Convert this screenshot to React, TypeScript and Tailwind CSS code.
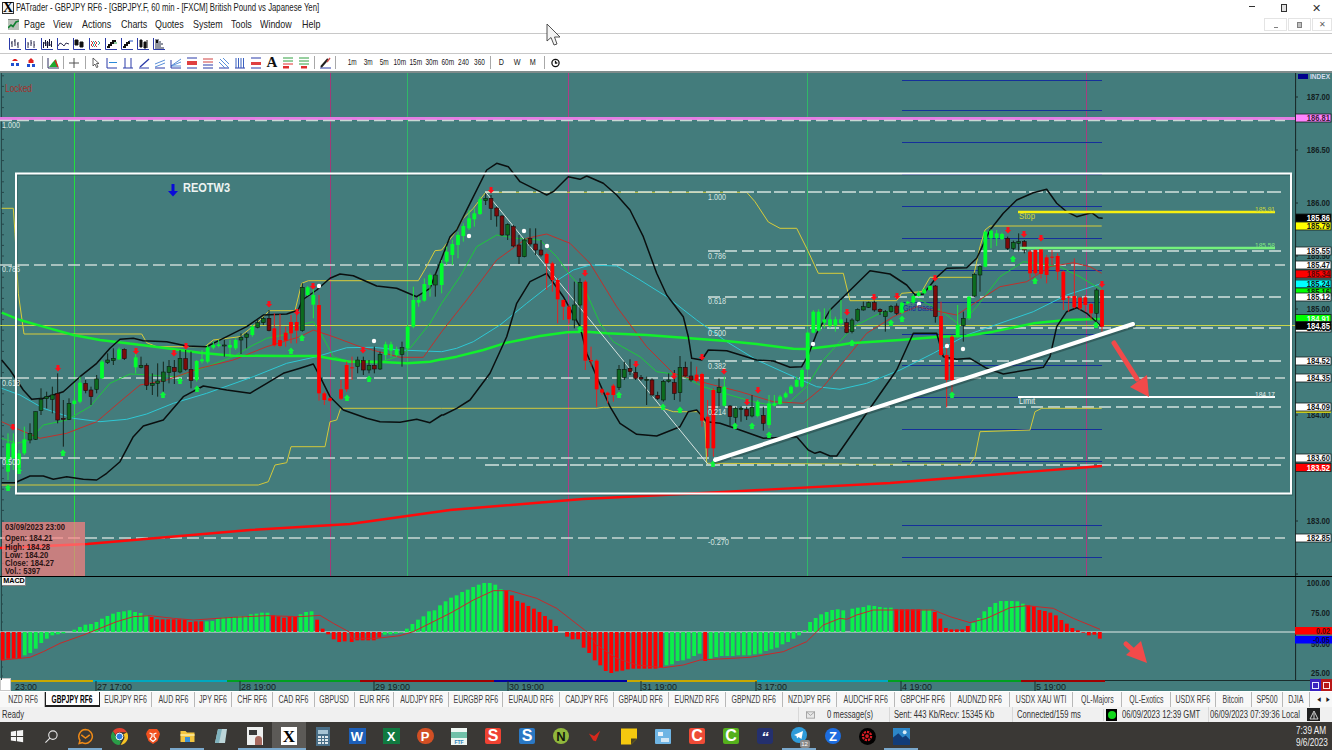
import React from "react";

// chart data read off the screen: x,y pairs are in "zoom" units (3x) relative to an origin
const O8 = [0, 160];
const O9 = [440, 160];
const O10 = [800, 170];

type Seg = string;

// joins three traced segments, each only used for its own x range
const trace = (a: Seg, b: Seg, c: Seg) => {
  const parse = (s: Seg, o: number[], min: number, max: number) =>
    s
      .split(" ")
      .filter(Boolean)
      .map((p) => {
        const [x, y] = p.split(",").map(Number);
        return [o[0] + x / 3, o[1] + y / 3];
      })
      .filter(([x]) => x >= min && x < max);
  return [...parse(a, O8, -9, 442), ...parse(b, O9, 442, 847), ...parse(c, O10, 847, 2000)]
    .map(([x, y]) => `${x.toFixed(1)},${y.toFixed(1)}`)
    .join(" ");
};

const upperBand = trace(
  "5,600 30,630 70,690 95,718 130,715 190,695 240,650 290,610 330,565 360,538 400,535 430,542 500,545 560,558 620,560 680,530 740,500 790,465 860,462 895,450 907,420 950,390 990,355 1020,342 1060,347 1130,378 1190,385 1250,410 1290,385 1340,290",
  "30,230 50,210 90,130 140,30 170,10 205,20 240,65 300,95 320,105 340,95 385,50 420,58 440,48 490,70 530,105 570,150 610,230 650,340 680,405 730,470 745,530 755,595 785,600 805,570 860,572 950,600 1000,603 1050,622 1085,620 1105,585 1130,520 1170,450 1225,375 1290,330 1350,342",
  "210,302 270,312 320,345 345,375 370,372 410,322 440,295 500,293 530,265 570,180 610,130 650,90 700,68 740,58 770,100 800,125 830,140 860,132 875,128 895,143 908,145"
);
const lowerBand = trace(
  "5,968 45,968 90,948 130,948 160,958 200,950 250,958 290,960 320,940 360,905 400,830 430,798 490,780 550,710 610,678 680,690 750,700 800,670 850,640 900,625 940,612 960,650 990,710 1030,750 1100,775 1140,785 1200,787 1250,778 1290,788 1325,765",
  "10,765 50,745 90,720 150,640 200,530 230,430 270,365 320,340 370,410 420,500 440,580 470,650 510,740 540,790 590,823 650,828 720,800 745,755 770,750 800,785 840,790 900,810 970,835 1070,830 1105,870 1125,880 1140,875 1170,888 1190,888 1240,860 1290,800 1330,730 1350,680",
  "290,600 340,490 410,490 430,560 470,568 510,565 560,595 610,612 680,600 730,592 750,560 770,470 800,425 830,413 860,430 905,470"
);
const slowMa = trace(
  "5,458 60,480 130,500 220,525 300,540 400,552 500,565 600,578 700,587 850,588 950,588 1000,597 1050,605 1130,605 1220,610 1290,605 1325,598",
  "10,598 50,590 130,570 200,548 300,528 380,517 440,515 500,520 620,525 750,535 850,542 950,552 1060,566 1100,567 1200,555",
  "150,520 300,510 420,500 500,497 580,485 700,460 800,450 900,447"
);
const cyanMa = trace(
  "5,685 60,705 130,745 220,775 300,785 380,778 440,762 520,730 620,700 760,650 860,610 950,590 1000,575 1040,563 1120,562 1200,570 1325,575",
  "0,575 50,565 100,545 180,495 260,430 330,375 400,330 450,315 530,318 600,360 680,410 770,480 860,545 950,600 1050,645 1130,680 1200,688",
  "200,640 300,600 400,550 500,495 600,460 700,425 800,375 900,342"
);
const fastGreen = trace(
  "5,835 50,850 90,840 130,795 200,780 270,740 330,670 390,642 450,645 530,650 620,620 700,590 750,560 800,535 850,525 900,495 940,485 960,515 1000,590 1050,605 1130,610 1190,590 1230,565 1290,490 1325,430",
  "0,450 60,350 110,260 170,225 230,235 300,240 350,290 390,345 440,400 480,490 520,545 600,590 650,635 720,645 790,680 870,705 940,725 990,735 1050,725 1100,680 1150,600",
  "160,470 240,430 300,415 350,385 420,420 480,465 530,410 600,320 670,275 780,290 840,320 905,360"
);
const fastRed = trace(
  "5,785 60,810 120,835 200,820 290,785 360,725 420,675 500,660 600,625 700,600 800,560 900,530 940,510 1000,530 1080,560 1200,592 1270,592 1325,515",
  "0,540 80,420 170,300 260,235 320,222 390,250 450,310 530,440 620,560 700,640 800,670 900,695 1000,725 1090,730 1150,680",
  "200,490 280,440 350,410 420,425 470,435 530,395 600,350 680,335 750,290 820,278 870,290 905,310"
);
const stopLine = trace(
  "5,145 40,145 45,220 55,400 72,522 425,522 440,548 470,560 615,560 640,540 720,530 770,490 808,452 885,452 905,370 925,362 1255,362 1275,328 1305,272 1325,270",
  "0,270 40,225 70,175 100,145 137,97 920,97 945,125 985,186 1020,205 1070,205 1100,265 1135,340 1210,340",
  "150,392 290,392 305,370 365,365 390,322 520,322 540,230 555,180 570,168 905,168"
);
const limitLine = trace(
  "5,975 775,975 805,965 825,915 860,908 873,860 975,860 990,785 1010,780 1022,745 1325,745",
  "0,745 470,745 490,742 660,742 700,755 775,755 795,790 800,910 1220,912",
  "150,883 510,883 525,860 540,785 690,780 705,725 725,715 905,715"
);

type Candle = [number, "g" | "d" | "r" | "m", number, number, number, number];

const candles8: Candle[] = [
  [24, "g", 850, 935, 820, 960], [40, "g", 850, 895, 820, 930], [57, "g", 880, 925, 870, 940], [73, "g", 838, 880, 800, 885],
  [90, "d", 820, 840, 790, 850], [107, "d", 755, 838, 755, 840], [123, "d", 718, 752, 685, 765], [140, "d", 710, 716, 695, 745],
  [157, "d", 705, 718, 680, 760], [173, "m", 700, 780, 640, 790], [190, "m", 775, 778, 720, 860], [207, "d", 730, 778, 715, 780],
  [223, "g", 722, 732, 715, 735], [240, "g", 668, 725, 650, 730], [257, "m", 670, 692, 660, 700], [273, "m", 690, 710, 680, 735],
  [290, "d", 657, 688, 645, 700], [306, "g", 605, 655, 600, 658], [323, "d", 600, 608, 580, 612], [340, "d", 595, 602, 565, 615],
  [357, "g", 568, 598, 562, 600], [373, "m", 568, 596, 565, 600], [407, "g", 592, 622, 575, 640], [423, "d", 616, 622, 590, 625],
  [440, "m", 616, 676, 610, 690], [457, "d", 670, 676, 640, 705], [473, "d", 663, 670, 610, 710], [490, "d", 636, 664, 605, 695],
  [507, "d", 620, 638, 600, 670], [523, "m", 622, 635, 600, 672], [540, "d", 596, 636, 570, 640], [557, "m", 596, 628, 570, 632],
  [573, "m", 628, 662, 575, 685], [590, "g", 603, 660, 600, 665], [606, "g", 598, 604, 570, 610], [623, "g", 562, 605, 555, 610],
  [640, "g", 555, 563, 545, 568], [656, "g", 553, 558, 540, 562], [673, "d", 555, 557, 540, 590], [690, "g", 555, 563, 540, 590],
  [707, "g", 540, 565, 535, 570], [723, "d", 532, 540, 520, 582], [740, "d", 522, 532, 518, 565], [757, "g", 500, 525, 495, 530],
  [773, "d", 488, 502, 480, 505], [790, "d", 475, 488, 470, 495], [807, "m", 475, 512, 450, 514], [823, "r", 505, 556, 460, 560],
  [840, "r", 540, 558, 462, 562], [857, "r", 518, 542, 500, 560], [873, "r", 486, 520, 465, 550], [890, "r", 486, 512, 460, 550],
  [907, "d", 382, 512, 370, 515], [923, "g", 382, 405, 378, 408], [940, "g", 405, 434, 385, 475], [957, "r", 435, 700, 405, 722],
  [973, "r", 700, 720, 695, 735], [990, "r", 715, 722, 712, 725], [1023, "r", 688, 716, 660, 720], [1040, "r", 615, 688, 605, 695],
  [1056, "r", 622, 625, 590, 660], [1073, "d", 600, 620, 590, 640], [1090, "m", 602, 630, 590, 645], [1107, "d", 616, 630, 600, 640],
  [1123, "m", 616, 627, 560, 640], [1140, "d", 583, 627, 575, 630], [1157, "g", 553, 585, 545, 600], [1173, "g", 553, 572, 545, 590],
  [1190, "g", 568, 585, 560, 590], [1206, "d", 563, 583, 545, 620], [1223, "g", 500, 565, 495, 570], [1240, "g", 420, 500, 380, 505],
  [1256, "g", 420, 428, 410, 440], [1273, "g", 372, 422, 355, 425], [1290, "g", 345, 375, 340, 410], [1306, "d", 345, 375, 340, 410],
];

const candles9: Candle[] = [
  [5, "g", 310, 375, 300, 400], [20, "g", 275, 305, 260, 315], [37, "g", 252, 285, 240, 315], [54, "g", 225, 255, 215, 295],
  [70, "g", 198, 228, 190, 245], [87, "g", 175, 205, 150, 210], [103, "g", 160, 178, 145, 200], [120, "g", 118, 162, 110, 165],
  [137, "d", 115, 122, 100, 135], [153, "m", 115, 145, 105, 180], [170, "m", 144, 168, 140, 200], [186, "m", 168, 225, 165, 228],
  [203, "d", 193, 225, 190, 240], [220, "m", 200, 258, 195, 262], [237, "m", 255, 290, 225, 312], [253, "d", 240, 290, 235, 292],
  [270, "m", 236, 252, 205, 260], [287, "m", 252, 270, 205, 285], [303, "m", 270, 285, 240, 290], [320, "r", 282, 310, 278, 390],
  [337, "r", 310, 360, 305, 395], [353, "r", 360, 418, 355, 490], [370, "r", 420, 440, 418, 480], [387, "r", 440, 478, 435, 490],
  [403, "d", 435, 480, 365, 505], [420, "d", 367, 435, 355, 505], [436, "r", 365, 602, 360, 630], [453, "r", 600, 604, 560, 620],
  [470, "r", 602, 688, 598, 740], [486, "r", 688, 698, 685, 705], [503, "r", 698, 705, 695, 730], [520, "r", 677, 705, 672, 725],
  [537, "d", 628, 682, 615, 690], [553, "d", 628, 652, 605, 660], [570, "m", 625, 635, 598, 645], [587, "m", 637, 655, 620, 660],
  [603, "m", 652, 657, 645, 662], [620, "d", 658, 661, 650, 735], [636, "m", 660, 705, 655, 710], [653, "m", 706, 716, 695, 720],
  [670, "d", 664, 720, 660, 725], [686, "d", 660, 664, 640, 668], [703, "m", 668, 700, 630, 720], [720, "d", 622, 698, 588, 725],
  [736, "m", 622, 648, 605, 650], [753, "m", 648, 660, 605, 665], [770, "r", 644, 663, 620, 668], [786, "r", 642, 782, 638, 800],
  [803, "r", 770, 865, 720, 890], [820, "r", 690, 865, 685, 890], [837, "d", 682, 698, 655, 745], [853, "g", 680, 737, 650, 740],
  [870, "m", 738, 770, 735, 800], [887, "d", 745, 772, 740, 800], [903, "d", 745, 747, 740, 785], [920, "m", 748, 768, 740, 780],
  [936, "d", 742, 768, 705, 772], [953, "g", 725, 768, 720, 772], [970, "m", 766, 790, 740, 812], [987, "g", 730, 795, 705, 805],
  [1003, "g", 730, 737, 705, 740], [1020, "g", 710, 732, 705, 735], [1037, "g", 700, 712, 695, 715], [1053, "g", 680, 700, 675, 702],
  [1070, "g", 660, 680, 650, 682], [1086, "g", 630, 680, 625, 685], [1103, "g", 518, 628, 515, 630], [1120, "g", 455, 518, 450, 520],
  [1136, "g", 455, 512, 448, 515], [1153, "g", 478, 488, 445, 505], [1170, "g", 478, 497, 445, 505], [1186, "g", 478, 497, 470, 515],
  [1203, "g", 478, 490, 420, 500],
];

const candles10: Candle[] = [
  [140, "m", 458, 488, 445, 490], [156, "d", 450, 485, 445, 490], [173, "d", 418, 452, 415, 455], [190, "d", 410, 420, 395, 422],
  [206, "d", 398, 412, 395, 414], [223, "m", 398, 420, 392, 425], [240, "m", 418, 425, 415, 435], [256, "d", 425, 440, 420, 485],
  [273, "d", 410, 425, 405, 428], [290, "m", 408, 430, 400, 435], [306, "g", 398, 428, 395, 432], [323, "g", 395, 400, 392, 402],
  [340, "g", 378, 398, 372, 400], [356, "g", 368, 378, 362, 380], [373, "g", 358, 370, 355, 372], [390, "g", 348, 360, 345, 362],
  [406, "m", 348, 440, 345, 458], [423, "r", 438, 555, 395, 560], [440, "r", 555, 630, 520, 712], [456, "r", 500, 630, 495, 680],
  [473, "g", 465, 500, 405, 503], [490, "d", 445, 467, 425, 515], [507, "g", 380, 445, 378, 450], [523, "d", 313, 378, 308, 382],
  [540, "d", 290, 315, 285, 365], [556, "g", 185, 290, 182, 292], [573, "g", 182, 205, 178, 235], [590, "g", 190, 205, 180, 228],
  [606, "g", 192, 207, 188, 210], [623, "m", 205, 235, 200, 240], [640, "d", 217, 235, 212, 240], [656, "d", 215, 220, 190, 245],
  [673, "m", 215, 240, 210, 250], [690, "r", 245, 310, 240, 325], [706, "r", 240, 310, 236, 315], [723, "r", 236, 312, 232, 325],
  [740, "r", 262, 315, 255, 340], [756, "r", 260, 262, 240, 285], [773, "r", 258, 305, 250, 330], [790, "r", 305, 390, 302, 420],
  [806, "r", 380, 383, 378, 425], [823, "r", 378, 412, 265, 415], [840, "r", 383, 415, 380, 420], [856, "r", 382, 405, 375, 425],
  [873, "r", 402, 430, 398, 450], [890, "d", 360, 430, 355, 455], [906, "r", 360, 470, 358, 485],
];

const allCandles = [
  ...candles8.map((c) => [O8, c] as const),
  ...candles9.map((c) => [O9, c] as const),
  ...candles10.map((c) => [O10, c] as const),
];

const candleStyle = {
  g: { body: "#00ff2e", wick: "#1ee83c", edge: "none" },
  r: { body: "#ff0000", wick: "#e82020", edge: "none" },
  d: { body: "#0d6b1f", wick: "#14241a", edge: "#0a1a10" },
  m: { body: "#7c0a0a", wick: "#14201a", edge: "#1a0a0a" },
};

const redArrows = [
  [58, 368], [13, 427], [269, 304], [186, 346], [174, 353], [136, 351], [297, 312], [313, 286], [363, 350], [491, 190], [585, 273],
  [636, 364], [674, 376], [702, 357], [724, 371], [747, 402], [758, 390], [847, 312], [874, 297], [897, 296], [935, 278], [1008, 230],
  [1024, 234], [1041, 238], [1102, 284],
];
const greenArrows = [
  [8, 488], [19, 471], [63, 453], [163, 395], [180, 381], [197, 389], [291, 351], [302, 338], [347, 398], [369, 379], [580, 329],
  [619, 395], [663, 407], [680, 410], [735, 426], [752, 426], [769, 435], [713, 464], [852, 343], [891, 323], [902, 319], [952, 395],
  [1013, 259], [1035, 281], [1096, 325],
];
const whiteDots = [
  [319, 286], [374, 341], [469, 236], [524, 231], [547, 246], [813, 344], [919, 304], [947, 346], [963, 349],
];

const gridY = [80, 110, 142, 174, 206, 238, 270, 302, 334, 365, 397, 429, 461, 493, 525, 557];
const axisTicks = Array.from({ length: 48 }, (_, i) => 75.8 + i * 10.6);

const Label = ({ x, y, w, fill = "#d6e4e0", size = 9, bold = false, children }: any) => (
  <text
    x={x}
    y={y}
    textLength={w}
    lengthAdjust="spacingAndGlyphs"
    fill={fill}
    fontSize={size}
    fontWeight={bold ? 700 : 400}
    fontFamily="'Liberation Sans', sans-serif"
  >
    {children}
  </text>
);

const MainChart = () => (
  <svg viewBox="0 73 1295 503" className="h-[503px] w-[1295px] shrink-0">
    {/* session separators */}
    <line x1="74.5" y1="73" x2="74.5" y2="576" stroke="#22e03c" />
    <line x1="407.5" y1="73" x2="407.5" y2="576" stroke="#30b868" />
    <line x1="807.5" y1="73" x2="807.5" y2="576" stroke="#30b868" />
    <line x1="330.5" y1="73" x2="330.5" y2="576" stroke="#a03a78" />
    <line x1="568.5" y1="73" x2="568.5" y2="576" stroke="#b03a88" />
    <line x1="1086.5" y1="73" x2="1086.5" y2="576" stroke="#a83a80" />

    {/* left ruler */}
    <line x1="1.5" y1="73" x2="1.5" y2="576" stroke="#26484a" />
    {axisTicks.map((y) => (
      <line key={y} x1="1" y1={y} x2="4" y2={y} stroke="#26484a" />
    ))}

    {/* pivot grid */}
    {gridY.map((y) => (
      <line key={y} x1="902" y1={y + 0.5} x2="1102" y2={y + 0.5} stroke="#15309a" />
    ))}

    {/* fib levels */}
    <rect x="0" y="117" width="1295" height="3" fill="#e37ee3" />
    {[120.5, 265, 378, 458, 538].map((y) => (
      <line key={y} x1="0" y1={y} x2="1285" y2={y} stroke="#c9d8d4" strokeWidth="1.3" strokeDasharray="12 5" />
    ))}
    {[251, 297, 328, 361, 407].map((y) => (
      <line key={y} x1="708" y1={y} x2="1281" y2={y} stroke="#d4e2de" strokeWidth="1.3" strokeDasharray="12 5" />
    ))}

    <line x1="0" y1="325.5" x2="1295" y2="325.5" stroke="#c8d64a" />

    {/* moving averages and bands */}
    <polyline points={stopLine} fill="none" stroke="#d8cc3a" strokeWidth="1" />
    <polyline points={limitLine} fill="none" stroke="#d4c93a" strokeWidth="1" />
    {[192, 465].map((y) => (
      <line key={y} x1="485" y1={y} x2="1281" y2={y} stroke="#d4e2de" strokeWidth="1.3" strokeDasharray="14 3" />
    ))}
    <polyline points={cyanMa} fill="none" stroke="#2ec8d4" strokeWidth="1" />
    <polyline points={fastGreen} fill="none" stroke="#1ec83c" strokeWidth="1" />
    <polyline points={fastRed} fill="none" stroke="#c0302c" strokeWidth="1" />
    <polyline
      points="0,548 87,544 250,530 350,524 450,510 583,499 723,492 890,483 1102,466"
      fill="none"
      stroke="#ff0a0a"
      strokeWidth="2.4"
    />
    <polyline points={slowMa} fill="none" stroke="#12f02c" strokeWidth="2.4" strokeLinejoin="round" />
    <polyline points={upperBand} fill="none" stroke="#0a0f0f" strokeWidth="1.5" strokeLinejoin="round" />
    <polyline points={lowerBand} fill="none" stroke="#0a0f0f" strokeWidth="1.5" strokeLinejoin="round" />

    {/* fib anchor */}
    <line x1="485.7" y1="192.3" x2="707.7" y2="464" stroke="#d8e4e0" strokeWidth="1" />

    {/* candles */}
    {allCandles.map(([o, [zx, kind, top, bottom, high, low]], i) => {
      const x = o[0] + zx / 3;
      const s = candleStyle[kind];
      return (
        <g key={i}>
          <line x1={x} y1={o[1] + high / 3} x2={x} y2={o[1] + low / 3} stroke={s.wick} strokeWidth="1" />
          <rect
            x={x - 1.9}
            y={o[1] + top / 3}
            width="3.8"
            height={Math.max((bottom - top) / 3, 1)}
            fill={s.body}
            stroke={s.edge}
            strokeWidth="0.6"
          />
        </g>
      );
    })}

    {/* signals */}
    {redArrows.map(([x, y]) => (
      <polygon key={`${x}r`} transform={`translate(${x} ${y})`} points="0,3.5 3.2,0 1.5,0 1.5,-3 -1.5,-3 -1.5,0 -3.2,0" fill="#ff0f1a" />
    ))}
    {greenArrows.map(([x, y]) => (
      <polygon key={`${x}g`} transform={`translate(${x} ${y})`} points="0,-3.5 3.2,0 1.8,0 1.8,3 -1.8,3 -1.8,0 -3.2,0" fill="#0df53c" />
    ))}
    {whiteDots.map(([x, y]) => (
      <circle key={x} cx={x} cy={y} r="2.2" fill="#ffffff" />
    ))}

    {/* order levels */}
    <line x1="1018" y1="212" x2="1275" y2="212" stroke="#f6f010" strokeWidth="2.6" />
    <line x1="1020" y1="248" x2="1275" y2="248" stroke="#74f27c" strokeWidth="2.4" />
    <line x1="1018" y1="397" x2="1275" y2="397" stroke="#ffffff" strokeWidth="2.2" />
    <Label x={1019} y={219} w={16} fill="#d8d83a" size={8.5}>Stop</Label>
    <Label x={1255} y={212} w={20} fill="#c8d840" size={8}>185.91</Label>
    <Label x={1255} y={248} w={20} fill="#80e880" size={8}>185.58</Label>
    <Label x={1019} y={404} w={16} fill="#e6efec" size={8.5}>Limit</Label>
    <Label x={1255} y={397} w={20} fill="#e6efec" size={8}>184.17</Label>
    <Label x={903} y={311} w={30} fill="#1b2d9a" size={8.5}>Grid Base</Label>

    {/* fib labels */}
    <Label x={708} y={200} w={18}>1.000</Label>
    <Label x={708} y={259} w={18}>0.786</Label>
    <Label x={708} y={304} w={18}>0.618</Label>
    <Label x={708} y={336} w={18}>0.500</Label>
    <Label x={708} y={369} w={18}>0.382</Label>
    <Label x={708} y={415} w={18}>0.214</Label>
    <Label x={708} y={545} w={21}>-0.270</Label>
    <Label x={2} y={128} w={18}>1.000</Label>
    <Label x={2} y={272} w={18}>0.786</Label>
    <Label x={2} y={386} w={18}>0.618</Label>
    <Label x={2} y={465} w={18}>0.500</Label>
    <Label x={5} y={92} w={27} fill="#a8302c" size={10}>Locked</Label>

    {/* hand drawn annotations */}
    <rect x="17" y="175" width="1275" height="320" fill="none" stroke="#1c3c3c" strokeOpacity="0.35" strokeWidth="1.5" />
    <rect x="16" y="173.5" width="1275" height="320" fill="none" stroke="#ffffff" strokeWidth="2" />
    <line x1="716" y1="462" x2="1134" y2="326" stroke="#1c3434" strokeOpacity="0.4" strokeWidth="4" strokeLinecap="round" />
    <line x1="715" y1="460" x2="1133" y2="324" stroke="#ffffff" strokeWidth="4" strokeLinecap="round" />
    <line x1="1114" y1="343" x2="1137" y2="379" stroke="#f24a4a" strokeWidth="5" strokeLinecap="round" />
    <polygon points="1149,397 1130,387 1147,375" fill="#f24a4a" />
    <path d="M171.5 184h3v7h3.5l-5 5.5-5-5.5h3.5z" fill="#0a0ad8" />
    <Label x={183} y={192} w={47} fill="#eef4f2" size={12} bold>REOTW3</Label>
  </svg>
);

const PriceBox = ({ y, fill, text, color = "#14181a" }: any) => (
  <g>
    <rect x="1295.5" y={y - 4} width="35.5" height="8" fill={fill} stroke="#15201f" strokeWidth="0.8" />
    <Label x={1306.8} y={y + 3} w={23.2} fill={color} size={8.2} bold>{text}</Label>
  </g>
);

const PriceAxis = () => (
  <svg viewBox="1295 73 37 503" className="h-[503px] w-[37px] shrink-0">
    <line x1="1295.5" y1="73" x2="1295.5" y2="576" stroke="#1a2c2c" strokeWidth="1.2" />
    {axisTicks.map((y, i) => (
      <line key={y} x1="1293" y1={y} x2={i % 5 === 2 ? 1298 : 1296} y2={y} stroke="#1a2c2c" />
    ))}
    <rect x="1298" y="74" width="10" height="5" fill="#00008c" />
    <Label x={1310} y={79} w={20} fill="#d8dcf0" size={7} bold>INDEX</Label>
    {[
      ["187.00", 97],
      ["186.50", 150],
      ["186.00", 203],
      ["185.50", 256],
      ["185.00", 309],
      ["184.00", 415],
      ["183.00", 521],
    ].map(([t, y]) => (
      <Label key={t} x={1306.8} y={Number(y) + 3} w={23.2} fill="#14201f" size={8.2} bold>{t}</Label>
    ))}
    <PriceBox y={118} fill="#ff84ff" text="186.81" color="#402040" />
    <PriceBox y={218} fill="#000000" text="185.86" color="#ffffff" />
    <PriceBox y={226} fill="#ffff00" text="185.79" />
    <PriceBox y={251} fill="#ffffff" text="185.55" />
    <PriceBox y={265} fill="#ffffff" text="185.47" />
    <PriceBox y={274} fill="#ff0000" text="185.34" color="#5a0a0a" />
    <PriceBox y={284} fill="#00ffff" text="185.24" />
    <PriceBox y={292} fill="#00ff00" text="185.16" />
    <PriceBox y={297} fill="#ffffff" text="185.12" />
    <PriceBox y={328} fill="#ffffff" text="184.82" />
    <PriceBox y={318.5} fill="#00ff00" text="184.91" color="#f0fff0" />
    <PriceBox y={325.5} fill="#000000" text="184.85" color="#ffffff" />
    <PriceBox y={361} fill="#ffffff" text="184.52" />
    <PriceBox y={378} fill="#ffffff" text="184.35" />
    <rect x="1296" y="411" width="35" height="2" fill="#c8c820" />
    <PriceBox y={407} fill="#ffffff" text="184.09" />
    <PriceBox y={458} fill="#ffffff" text="183.60" />
    <PriceBox y={467.5} fill="#ff0000" text="183.52" color="#ffffff" />
    <PriceBox y={538} fill="#ffffff" text="182.85" />
  </svg>
);

// histogram, as runs of colour; heights are in zoom units above (+) or below (-) the zero line
type Run = ["g" | "r", number[]];
const macdA: Run[] = [
  ["r", [-85, -80, -80, -80]],
  ["g", [-70, -63, -50, -33, -20, -10, -7, -4, 0, 7, 15, 22, 24, 30, 40, 48, 55, 60, 62, 65, 60, 57, 50]],
  ["r", [45, 38, 38, 38, 38, 38, 37, 30, 32, 32]],
  ["g", [32, 33, 40, 43, 45, 45, 47, 48, 53, 55, 58, 58]],
  ["r", [50, 47, 43, 47, 45]],
  ["g", [53, 60, 62]],
  ["r", [37, 10, -7, -22, -30, -28]],
];
const macdB: Run[] = [
  ["r", [-30, -25, -25, -25, -25, -17]],
  ["g", [-8, -7, -5, -2, 10, 24, 37, 47, 62, 65, 80, 92, 103, 110, 120, 127, 135, 142, 147, 147, 142, 128]],
  ["r", [125, 110, 93, 88, 78, 70, 60, 48, 37, 18, 0, -14, -22, -22, -47, -63, -85, -100, -117, -123, -118, -116, -112, -110, -110, -110, -110, -110, -108]],
  ["g", [-100, -97, -87, -85, -80, -72, -65]],
  ["r", [-87]],
  ["g", [-80, -75, -72, -72, -72, -70, -70, -70, -67, -65, -57, -52, -47, -37, -30, -20, -10, 5, 30, 42, 53, 60, 66, 68, 65]],
];
const macdC: Run[] = [
  ["g", [70, 73, 75, 80, 78, 75, 73, 73]],
  ["r", [68, 68, 68, 68, 68]],
  ["g", [67, 67]],
  ["r", [60, 40, 12, 8, 8, 8, 18]],
  ["g", [28, 42, 62, 75, 87, 93, 93, 93, 92, 85]],
  ["r", [80, 78, 66, 63, 58, 50, 36, 25, 12, 5, -2, -10, -8, -20]],
];

const layoutRuns = (runs: Run[], start: number, step: number) => {
  const out: { x: number; v: number; c: string }[] = [];
  runs.forEach(([c, vals]) =>
    vals.forEach((v) => {
      out.push({ x: start + (out.length * step) / 3, v, c });
    })
  );
  return out;
};
const macdBars = [
  ...layoutRuns(macdA, 8 / 3, 16.55),
  ...layoutRuns(macdB, 350 + 5 / 3, 16.57),
  ...layoutRuns(macdC, 840 + 37 / 3, 16.5),
];

const signalPts = [
  "5,480 60,475 90,472 130,455 180,430 250,405 300,385 350,365 400,350 450,347 520,355 580,360 700,352 800,347 900,350 960,346 1000,370 1048,396"
    .split(" ")
    .map((p) => p.split(",").map(Number))
    .map(([x, y]) => `${x / 3},${500 + y / 3}`)
    .join(" "),
  "5,205 80,205 150,197 190,185 300,130 370,90 430,62 480,62 560,85 620,115 710,185 740,225 800,265 860,285 940,293 1000,285 1050,270 1200,262 1300,245 1370,215 1420,165 1470,145"
    .split(" ")
    .map((p) => p.split(",").map(Number))
    .map(([x, y]) => `${350 + x / 3},${570 + y / 3}`)
    .join(" "),
  "20,148 50,135 100,120 280,120 330,140 390,158 440,145 510,113 560,107 640,115 700,145 780,178"
    .split(" ")
    .map((p) => p.split(",").map(Number))
    .map(([x, y]) => `${840 + x / 3},${570 + y / 3}`)
    .join(" "),
].join(" ");

const MacdPane = () => (
  <div className="flex h-[103px] shrink-0 border-t-0">
    <svg viewBox="0 577 1295 103" className="h-[103px] w-[1295px] shrink-0">
      <line x1="1.5" y1="577" x2="1.5" y2="680" stroke="#26484a" />
      {[586, 595, 604, 613, 622, 631, 640, 649, 658, 667, 676].map((y) => (
        <line key={y} x1="1" y1={y} x2="3" y2={y} stroke="#26484a" />
      ))}
      <line x1="0" y1="632" x2="1295" y2="632" stroke="#e4ecea" strokeWidth="1" />
      {macdBars.map((b, i) =>
        b.v === 0 ? null : (
          <rect
            key={i}
            x={b.x - 1.9}
            y={b.v > 0 ? 632 - b.v / 3 : 632}
            width="3.8"
            height={Math.abs(b.v) / 3}
            fill={b.c === "g" ? "#0af04a" : "#ff0000"}
          />
        )
      )}
      <polyline points={signalPts} fill="none" stroke="#c8282a" strokeWidth="1" />
      <line x1="1126" y1="644" x2="1137" y2="654" stroke="#f24a4a" strokeWidth="5" strokeLinecap="round" />
      <polygon points="1147,663 1126,655 1141,641" fill="#f24a4a" />
    </svg>
    <svg viewBox="1295 577 37 103" className="h-[103px] w-[37px] shrink-0">
      <line x1="1295.5" y1="577" x2="1295.5" y2="680" stroke="#1a2c2c" strokeWidth="1.2" />
      {[579, 588, 597, 606, 615, 624, 633, 642, 651, 660, 669, 678].map((y) => (
        <line key={y} x1="1293" y1={y} x2="1296" y2={y} stroke="#1a2c2c" />
      ))}
      <Label x={1306.8} y={586} w={23.2} fill="#14201f" size={8.2} bold>100.00</Label>
      <Label x={1311} y={616} w={19} fill="#14201f" size={8.2} bold>75.00</Label>
      <Label x={1311} y={647} w={19} fill="#14201f" size={8.2} bold>50.00</Label>
      <Label x={1311} y={676} w={19} fill="#14201f" size={8.2} bold>25.00</Label>
      <rect x="1295" y="627" width="37" height="7.5" fill="#ff0000" />
      <Label x={1316} y={633.5} w={14} fill="#4a0a0a" size={8.2} bold>0.02</Label>
      <rect x="1295" y="636" width="37" height="7.5" fill="#0000ff" />
      <Label x={1313} y={642.5} w={17} fill="#0a0a3a" size={8.2} bold>-0.05</Label>
    </svg>
  </div>
);

const timeBands = [
  [11, 93, "#c8a800"], [93, 227, "#00a8c0"], [227, 360, "#00a020"], [360, 494, "#a00000"], [494, 627, "#0000a0"],
  [627, 757, "#c8a800"], [757, 888, "#00a8c0"], [888, 1021, "#00a020"], [1021, 1105, "#a00000"],
] as const;
const timeLabels: [number, string, number][] = [
  [15, "23:00", 22], [97, "27 17:00", 35], [241, "28 19:00", 35], [375, "29 19:00", 35], [509, "30 19:00", 35], [642, "31 19:00", 35], [757, "3 17:00", 30], [902, "4 19:00", 30], [1036, "5 19:00", 30],
];

const TimeAxis = () => (
  <div className="flex h-[11px] shrink-0 items-stretch">
    <div className="mt-[-2px] h-[13px] w-[11px] shrink-0 border border-[#c8c8c8] bg-white" />
    <svg viewBox="11 680 1299 11" className="h-[11px] w-[1299px] shrink-0">
      {timeBands.map(([a, b, c]) => (
        <line key={a} x1={a} y1="681" x2={b} y2="681" stroke={c} strokeWidth="2" />
      ))}
      <line x1="1105" y1="680.5" x2="1310" y2="680.5" stroke="#1a2c2c" />
      {timeLabels.map(([x, t, w]) => (
        <g key={t}>
          {x > 20 && <line x1={x - 1} y1="681" x2={x - 1} y2="691" stroke="#1a2c2c" />}
          <Label x={x} y={690} w={w} fill="#14201f" size={9.5}>{t}</Label>
        </g>
      ))}
    </svg>
    <div className="mt-[-1px] flex h-[12px] w-[11px] shrink-0 items-center justify-center bg-[#3a22c0]">
      <div className="h-[7px] w-[7px] border border-[#e8e8ff]" />
    </div>
    <div className="mt-[-1px] flex h-[12px] w-[11px] shrink-0 items-center justify-center bg-[#b81818]">
      <div className="h-[7px] w-[7px] border border-[#ffe8e8]" />
    </div>
  </div>
);

const Squeeze = ({ children, className = "" }: any) => (
  <span className={`inline-block origin-center scale-x-[0.7] whitespace-nowrap ${className}`}>{children}</span>
);

const tabs = [
  ["NZD RF6", "w-[42px]"], ["GBPJPY RF6", "w-[55px]"], ["EURJPY RF6", "w-[52px]"], ["AUD RF6", "w-[43px]"], ["JPY RF6", "w-[37px]"],
  ["CHF RF6", "w-[41px]"], ["CAD RF6", "w-[42px]"], ["GBPUSD", "w-[40px]"], ["EUR RF6", "w-[39px]"], ["AUDJPY RF6", "w-[55px]"],
  ["EURGBP RF6", "w-[54px]"], ["EURAUD RF6", "w-[57px]"], ["CADJPY RF6", "w-[54px]"], ["GBPAUD RF6", "w-[55px]"], ["EURNZD RF6", "w-[57px]"],
  ["GBPNZD RF6", "w-[57px]"], ["NZDJPY RF6", "w-[54px]"], ["AUDCHF RF6", "w-[58px]"], ["GBPCHF RF6", "w-[56px]"], ["AUDNZD RF6", "w-[59px]"],
  ["USDX XAU WTI", "w-[63px]"], ["QL-Majors", "w-[49px]"], ["QL-Exotics", "w-[49px]"], ["USDX RF6", "w-[45px]"], ["Bitcoin", "w-[36px]"],
  ["SP500", "w-[31px]"], ["DJIA", "w-[27px]"],
];

const TabBar = () => (
  <div className="mt-px flex h-[15px] shrink-0 bg-[#f8f8f8] pl-[3px] text-[10px] text-[#404040]">
    {tabs.map(([t, w], i) =>
      i === 1 ? (
        <div key={t} className={`${w} flex shrink-0 justify-center border-x border-b-2 border-[#202020] bg-white font-bold leading-[15px] text-black`}>
          <Squeeze className="scale-x-[0.66]">{t}</Squeeze>
        </div>
      ) : (
        <div key={t} className={`${w} flex shrink-0 justify-center border-r border-[#b8b8b8] leading-[16px]`}>
          <Squeeze>{t}</Squeeze>
        </div>
      )
    )}
    <div className="flex w-[22px] items-center justify-around pl-1 text-[8px] text-[#202020]">
      <Squeeze>◄</Squeeze>
      <Squeeze>►</Squeeze>
    </div>
  </div>
);

const StatusText = ({ children, className = "" }: any) => (
  <span className={`inline-block origin-left scale-x-[0.76] whitespace-nowrap ${className}`}>{children}</span>
);

const StatusBar = () => (
  <div className="flex h-[15px] shrink-0 items-center bg-[#f0f0f0] text-[10px] text-[#303030]">
    <div className="w-[798px] shrink-0 pl-[2px]">
      <StatusText>Ready</StatusText>
    </div>
    <div className="flex w-[91px] shrink-0 items-center border-l border-[#d8d8d8] pl-[7px]">
      <svg viewBox="0 0 10 8" className="mr-[12px] h-[8px] w-[9px] shrink-0">
        <rect x="0.5" y="0.5" width="9" height="7" fill="#e8e8e8" stroke="#a0a0a0" />
        <path d="M0.5 0.5 5 4.5 9.5 0.5" fill="none" stroke="#a0a0a0" />
      </svg>
      <StatusText>0 message(s)</StatusText>
    </div>
    <div className="w-[123px] shrink-0 border-l border-[#d8d8d8] pl-[4px]">
      <StatusText>Sent: 443 Kb/Recv: 15345 Kb</StatusText>
    </div>
    <div className="w-[91px] shrink-0 border-l border-[#d8d8d8] pl-[4px]">
      <StatusText>Connected/159 ms</StatusText>
    </div>
    <div className="flex w-[19px] shrink-0 items-center border-l border-[#d8d8d8] pl-[2px]">
      <div className="flex h-[12px] w-[11px] items-center justify-center bg-black">
        <div className="h-[8px] w-[8px] rounded-full bg-[#12d81c]" />
      </div>
    </div>
    <div className="w-[86px] shrink-0">
      <StatusText>06/09/2023 12:39 GMT</StatusText>
    </div>
    <div className="w-[99px] shrink-0 border-l border-[#d8d8d8] pl-[1px]">
      <StatusText>06/09/2023 07:39:36 Local</StatusText>
    </div>
    <div className="flex h-[13px] w-[13px] shrink-0 items-center justify-center bg-[#202020]">
      <svg viewBox="0 0 10 10" className="h-[10px] w-[10px]">
        <path d="M5 1 1 9h8z M5 3v6" fill="none" stroke="#d0d0d0" />
      </svg>
    </div>
  </div>
);

const LetterTile = ({ bg, letter, text = "text-white", className = "", font = "font-bold text-[13px]" }: any) => (
  <div className={`flex h-[16px] w-[16px] items-center justify-center overflow-hidden leading-none ${bg} ${text} ${font} ${className}`}>
    {letter}
  </div>
);

const taskIcons: { node: React.ReactNode; line?: boolean; active?: boolean }[] = [
  {
    node: (
      <svg viewBox="0 0 16 16" className="h-[14px] w-[14px]">
        <path d="M1 3l6-1v6H1zM8 2l7-1v7H8zM1 9h6v5l-6-1zM8 9h7v6l-7-1z" fill="#f4f4f4" />
      </svg>
    ),
  },
  {
    node: (
      <svg viewBox="0 0 16 16" className="h-[15px] w-[15px]" fill="none" stroke="#e4e4e4" strokeWidth="1.2">
        <circle cx="9.5" cy="6.5" r="4.5" />
        <path d="M6.3 9.7 1.5 14.5" />
      </svg>
    ),
  },
  {
    line: true,
    node: (
      <svg viewBox="0 0 16 16" className="h-[17px] w-[17px]" fill="none" stroke="#ef8a17" strokeWidth="1.4">
        <path d="M8 1.5a6.5 6.5 0 1 1-3 12.3l-3 .8.8-3A6.5 6.5 0 0 1 8 1.5z" />
        <path d="M4 6.5 8 9.5l4-3" />
      </svg>
    ),
  },
  {
    node: (
      <svg viewBox="0 0 16 16" className="h-[17px] w-[17px]">
        <path d="M8 0a8 8 0 0 1 7 4H8a4 4 0 0 0-3.6 2.3L1.8 3A8 8 0 0 1 8 0z" fill="#e2412f" />
        <path d="M15 4a8 8 0 0 1-6 12l3.2-5.5A4 4 0 0 0 11.5 6z" fill="#f6c324" />
        <path d="M1.8 3l3.4 6A4 4 0 0 0 9.5 12L8 16A8 8 0 0 1 1.8 3z" fill="#2a9d47" />
        <circle cx="8" cy="8" r="3.2" fill="#2f7de0" stroke="#fff" strokeWidth="0.9" />
      </svg>
    ),
  },
  {
    node: (
      <svg viewBox="0 0 16 16" className="h-[18px] w-[16px]">
        <path d="M4 1h8l2 2.5L15 6l-2.5 7L8 16l-4.5-3L1 6l1-2.5z" fill="#f1501e" />
        <path d="M4.5 5 7 6V8.5L5 11l3 2.5L11 11 9 8.5V6l2.5-1" fill="none" stroke="#fff" strokeWidth="1.2" />
      </svg>
    ),
  },
  {
    line: true,
    node: (
      <svg viewBox="0 0 16 16" className="h-[16px] w-[17px]">
        <path d="M1 3h5l1.5 1.5H15V14H1z" fill="#f3c53f" />
        <rect x="1" y="6" width="14" height="2" fill="#fbe38a" />
        <rect x="5.5" y="9" width="5" height="5" fill="#3a8fd6" />
      </svg>
    ),
  },
  {
    node: (
      <svg viewBox="0 0 16 16" className="h-[16px] w-[16px]">
        <path d="M5 1h9l-2 14H2z" fill="#bcd5d8" />
        <path d="M5 1 2 15h4l3-14z" fill="#7fb2bd" />
      </svg>
    ),
  },
  {
    line: true,
    node: (
      <div className="relative h-[18px] w-[16px] bg-[#eef0f0]">
        <div className="absolute left-[2px] top-[3px] h-[5px] w-[8px] bg-[#3a3a3a]" />
        <div className="absolute bottom-0 right-[1px] h-[9px] w-[7px] rounded-t-full bg-[#a86a60]" />
      </div>
    ),
  },
  {
    line: true,
    active: true,
    node: <LetterTile bg="bg-white" letter="X" text="text-black" font="font-black text-[17px] font-['Liberation_Serif',serif]" className="h-[18px]" />,
  },
  {
    node: (
      <div className="grid h-[19px] w-[14px] grid-cols-3 content-end gap-[1px] bg-[#4a6f88] p-[2px]">
        <div className="col-span-3 mb-[1px] h-[4px] bg-[#a8c4d4]" />
        {Array.from({ length: 9 }, (_, i) => (
          <div key={i} className="h-[2px] bg-[#dfe7ec]" />
        ))}
      </div>
    ),
  },
  { node: <LetterTile bg="bg-[#1d5fb8]" letter="W" className="w-[17px]" /> },
  { node: <LetterTile bg="bg-[#107a40]" letter="X" className="w-[17px]" /> },
  {
    node: <LetterTile bg="bg-[#d24f24]" letter="P" className="w-[17px] rounded-full" />,
  },
  {
    node: (
      <div className="flex h-[17px] w-[16px] flex-col justify-end bg-[#eef6f2] text-center text-[5px] font-bold leading-none text-[#2a80b8]">
        <div className="mb-[2px] h-[6px] bg-[#70c0a8]" />
        FTF
      </div>
    ),
  },
  { node: <LetterTile bg="bg-[#ef4232]" letter="S" className="rounded-[2px]" font="font-bold text-[16px]" /> },
  { node: <LetterTile bg="bg-[#2a78c4]" letter="S" className="rounded-[2px]" font="font-bold text-[16px]" /> },
  { node: <LetterTile bg="bg-[#90b83c]" letter="N" text="text-[#10180c]" className="rounded-full" /> },
  {
    node: (
      <svg viewBox="0 0 16 16" className="h-[14px] w-[16px]">
        <path d="M1 5l6 3 7-6-5 12-3-1z" fill="#d8281c" />
      </svg>
    ),
  },
  {
    node: (
      <svg viewBox="0 0 16 16" className="h-[17px] w-[16px]">
        <path d="M0 0h16v10l-6 6H0z" fill="#f5c90f" />
        <path d="M16 10l-6 6v-6z" fill="#4a4420" />
      </svg>
    ),
  },
  {
    node: (
      <div className="relative h-[15px] w-[16px] rounded-[1px] bg-[#6fb5e4]">
        <div className="absolute left-[3px] top-[3px] h-[4px] w-[5px] bg-[#e8f2fa]" />
        <div className="absolute bottom-[2px] right-[2px] h-[4px] w-[8px] bg-[#d4e8f6]" />
      </div>
    ),
  },
  { node: <LetterTile bg="bg-[#ee4b36]" letter="C" className="rounded-[2px]" font="font-bold text-[16px]" /> },
  { node: <LetterTile bg="bg-[#55b01c]" letter="C" className="rounded-[2px]" font="font-bold text-[16px]" /> },
  { node: <LetterTile bg="bg-[#24306e]" letter="“" className="rounded-[3px]" font="font-bold italic text-[15px]" /> },
  {
    line: true,
    node: (
      <div className="relative h-[18px] w-[17px]">
        <svg viewBox="0 0 16 16" className="h-[16px] w-[16px]">
          <circle cx="8" cy="8" r="8" fill="#2f9bd9" />
          <path d="M3 8l9-4-1.5 8-3-2-1.5 1.5-.5-2.5z" fill="#fff" />
        </svg>
        <div className="absolute -bottom-[3px] -right-[2px] h-[8px] w-[10px] rounded-[2px] bg-[#8a8a8a] text-center text-[6px] leading-[8px] text-white">12</div>
      </div>
    ),
  },
  { node: <LetterTile bg="bg-[#1d6de0]" letter="Z" className="rounded-full" /> },
  {
    node: (
      <div className="flex h-[17px] w-[17px] items-center justify-center rounded-full bg-black">
        <svg viewBox="0 0 16 16" className="h-[12px] w-[12px]">
          <circle cx="8" cy="8" r="5.5" fill="none" stroke="#d81c24" strokeWidth="3" strokeDasharray="3 1.2" />
          <circle cx="8" cy="8" r="2.5" fill="#d81c24" />
        </svg>
      </div>
    ),
  },
  {
    line: true,
    node: (
      <svg viewBox="0 0 16 16" className="h-[17px] w-[17px]">
        <rect width="16" height="16" fill="#2c86c8" />
        <path d="M0 16V9l5-4 4 4 3-2 4 4v5z" fill="#123c78" />
        <circle cx="11" cy="4" r="1.8" fill="#d8ecf8" />
      </svg>
    ),
  },
];

const Taskbar = () => (
  <div className="flex h-[28px] shrink-0 bg-[#3a3835]">
    {taskIcons.map((t, i) => (
      <div
        key={i}
        className={`flex h-[28px] w-[34px] shrink-0 items-center justify-center ${t.line ? "border-b-2 border-[#7aa8cc] pt-[2px]" : ""} ${t.active ? "bg-[#5c5a57]" : ""}`}
      >
        {t.node}
      </div>
    ))}
    <div className="ml-auto flex w-[36px] flex-col pt-[3px] text-[10px] leading-[12px] text-[#f0f0f0]">
      <span className="inline-block origin-left scale-x-[0.82] whitespace-nowrap">7:39 AM</span>
      <span className="inline-block origin-left scale-x-[0.82] whitespace-nowrap">9/6/2023</span>
    </div>
  </div>
);

const MenuText = ({ children }: any) => (
  <span className="inline-block origin-left scale-x-[0.85] whitespace-nowrap">{children}</span>
);

const menus = [
  ["Page", "w-[29px]"], ["View", "w-[29px]"], ["Actions", "w-[39px]"], ["Charts", "w-[34px]"], ["Quotes", "w-[38px]"],
  ["System", "w-[38px]"], ["Tools", "w-[29px]"], ["Window", "w-[42px]"], ["Help", "w-[20px]"],
];

const TitleBar = () => (
  <div className="flex h-[16px] shrink-0 items-center bg-white text-[10.5px] text-[#202020]">
    <div className="ml-[2px] mr-[2px] flex h-[12px] w-[12px] shrink-0 items-center justify-center border border-[#303030] bg-[#f4f4f4] font-['Liberation_Serif',serif] text-[14px] font-black leading-none text-black">
      X
    </div>
    <span className="inline-block origin-left scale-x-[0.74] whitespace-nowrap">PATrader - GBPJPY RF6 - [GBPJPY.F, 60 min - [FXCM] British Pound vs Japanese Yen]</span>
    <div className="ml-auto flex shrink-0">
      <div className="flex w-[32px] justify-center">
        <div className="mt-[2px] h-px w-[6px] bg-[#303030]" />
      </div>
      <div className="flex w-[32px] justify-center">
        <div className="h-[8px] w-[6px] border border-[#303030] bg-[#e0e0e0]" />
      </div>
      <div className="flex w-[32px] justify-center font-['Liberation_Sans',sans-serif] text-[11px] leading-[9px] text-[#303030]">✕</div>
    </div>
  </div>
);

const MenuBar = () => (
  <div className="flex h-[18px] shrink-0 items-center border-b border-[#c8c8c8] bg-white text-[10.5px] text-[#202020]">
    <div className="ml-[8px] mr-[5px] h-[11px] w-[11px] shrink-0 overflow-hidden bg-[#b8c0b8]">
      <svg viewBox="0 0 11 11" className="h-[11px] w-[11px]">
        <path d="M0 9l3-3 2 1.5L8 3l3-1" fill="none" stroke="#108030" strokeWidth="1.6" />
        <path d="M0 0h11" stroke="#505050" />
      </svg>
    </div>
    {menus.map(([m, w]) => (
      <div key={m} className={`${w} shrink-0`}>
        <MenuText>{m}</MenuText>
      </div>
    ))}
    <div className="ml-auto flex h-[13px] shrink-0 gap-px pr-0 text-[#606060]">
      <div className="flex w-[23px] items-end justify-center border border-[#e4e4e4] pb-[2px]">
        <div className="h-px w-[4px] bg-[#808080]" />
      </div>
      <div className="flex w-[23px] items-center justify-center border border-[#e4e4e4]">
        <div className="h-[6px] w-[5px] border border-[#808080] bg-[#c0c0c0]" />
      </div>
      <div className="flex w-[20px] items-center justify-center border border-[#e4e4e4] text-[8px] leading-none">✕</div>
    </div>
  </div>
);

const Ico = ({ children }: any) => (
  <svg viewBox="0 0 12 12" className="h-[12px] w-[12px]" fill="none" strokeWidth="1">
    {children}
  </svg>
);
const Base = () => <path d="M0.5 0v11.5H12" stroke="#2a3aa8" />;
const Cell = ({ children }: any) => <div className="flex h-full w-[16px] shrink-0 items-center justify-center">{children}</div>;
const Sep = ({ className }: { className: string }) => (
  <div className={`flex h-full shrink-0 items-center justify-center ${className}`}>
    <div className="h-[13px] w-px bg-[#a8a8a8]" />
  </div>
);

const chartTypes = [
  <Ico><Base /><path d="M3 3v6M6 1v7M9 4v6M2 5h1M5 3h1M8 6h1" stroke="#202040" /></Ico>,
  <Ico><Base /><path d="M3 4v6M6 2v6M9 3v7M3 6h1M6 5h1M9 7h1" stroke="#303050" /></Ico>,
  <Ico><Base /><path d="M2.5 4v6M4.5 2v6M6.5 3v7M8.5 1v7M10.5 3v6" stroke="#101030" /><path d="M2 5h6M4 7h7" stroke="#202040" /></Ico>,
  <Ico><Base /><path d="M1 8 3 5l2 1 2 2 2-3 3 1" stroke="#303050" /></Ico>,
  <Ico><Base /><path d="M2 2h3v5H2zM7 4h3v5H7z" fill="#101010" stroke="#101010" /></Ico>,
  <Ico><Base /><path d="M2 3l2 2-2 2 2 2M6 3l2 2-2 2 2 2" stroke="#d03030" /><path d="M4 3l2 2-2 2 2 2M9 3l2 2-2 2" stroke="#30a0a0" /></Ico>,
  <Ico><Base /><path d="M2 9h2V7h2V5h2V3h3" stroke="#101010" strokeWidth="2" /><path d="M9 5h3" stroke="#20a040" /></Ico>,
  <Ico><Base /><path d="M2 9h2V7h2V5h2V3" stroke="#101010" strokeWidth="2" /><path d="M8 3h4" stroke="#2050c0" /></Ico>,
  <Ico><Base /><path d="M3 2h2v7H3zM7 4h2v6H7z" fill="#101010" stroke="#101010" /><path d="M10 2v8" stroke="#101010" /></Ico>,
  <Ico><Base /><path d="M2 2h4M2 4h6M2 6h8M2 8h6M2 10h9" stroke="#202840" /><path d="M4 2v3" stroke="#101010" strokeWidth="2" /></Ico>,
];

const drawTools = [
  <Ico><path d="M1 1v10h10" stroke="#2a3aa8" /><path d="M3 5.5h8" stroke="#2a88d8" /></Ico>,
  <Ico><path d="M1 11h10" stroke="#2a3aa8" /><path d="M3 1v10M9 1v10" stroke="#2a3aa8" /></Ico>,
  <Ico><path d="M1 11h10" stroke="#2a3aa8" /><path d="M2 10 11 2" stroke="#2a3aa8" strokeWidth="1.4" /></Ico>,
  <Ico><path d="M1 11h10" stroke="#2a3aa8" /><path d="M1 7l10-4M1 10l10-4" stroke="#5a90d8" /></Ico>,
  <Ico><path d="M1 11h10" stroke="#2a3aa8" /><path d="M1 9l10-7M1 9l10-4M1 9h10" stroke="#5a90d8" /><path d="M1 3v8" stroke="#2a3aa8" /></Ico>,
  <Ico><path d="M1 1h10M1 11h10" stroke="#2a3aa8" /><rect x="1" y="4" width="10" height="4" fill="#e04040" /></Ico>,
  <Ico><path d="M1 2h10M1 5h10" stroke="#d04040" /><path d="M1 8h10M1 11h10" stroke="#2a3aa8" /></Ico>,
  <Ico><path d="M1 11h10" stroke="#2a3aa8" /><path d="M1 5l6 6M2 2l9 9M5 1l6 6" stroke="#5a90d8" /></Ico>,
  <Ico><path d="M1 11h10" stroke="#2a3aa8" /><path d="M2 1v10M4.5 1v10M7 1v10M9.5 1v10" stroke="#3a60c0" /></Ico>,
  <Ico><path d="M1 1h10M1 11h10" stroke="#2a3aa8" /><rect x="1" y="5" width="10" height="3" fill="#e04040" /></Ico>,
];

const timeframes = ["1m", "3m", "5m", "10m", "15m", "30m", "60m", "240", "360"];

const Toolbars = () => (
  <>
    <div className="flex h-[20px] shrink-0 items-center border-b border-[#c8c8c8] bg-white pl-[7px]">
      {chartTypes.map((icon, i) => (
        <Cell key={i}>{icon}</Cell>
      ))}
    </div>
    <div className="flex h-[19px] shrink-0 items-center border-b-2 border-[#808c8c] bg-white pl-[7px] text-[9px] text-[#202020]">
      <Cell>
        <Ico>
          <path d="M5 2h2l2 2H3z" fill="#e02020" /><path d="M2 6h3v3H2zM7 6h3v3H7z" fill="#2050d0" />
        </Ico>
      </Cell>
      <Cell>
        <Ico>
          <path d="M3.5 3.5 6 1l2.5 2.5V6h-5z" fill="#e02020" /><path d="M2 7h3v3H2zM7 7h3v3H7z" fill="#2050d0" />
        </Ico>
      </Cell>
      <Sep className="w-[6px]" />
      <Cell>
        <Ico>
          <path d="M1 1v10h11" stroke="#303060" /><path d="M2 10 6 5l3-3 2 8z" fill="#20a830" /><path d="M8 3l3 7" stroke="#e02020" strokeWidth="1.4" />
        </Ico>
      </Cell>
      <Sep className="w-[5px]" />
      <Cell>
        <Ico><path d="M6 1v10M1 6h10" stroke="#505050" /></Ico>
      </Cell>
      <Sep className="w-[6px]" />
      <Cell>
        <Ico><path d="M3 1v8l2-2 1.5 3.5L8 10 6.5 6.5H9z" fill="#ffffff" stroke="#404040" strokeWidth="0.8" /></Ico>
      </Cell>
      {drawTools.map((icon, i) => (
        <Cell key={i}>{icon}</Cell>
      ))}
      <Cell>
        <span className="font-['Liberation_Serif',serif] text-[15px] font-bold leading-none text-[#101010]">A</span>
      </Cell>
      <Cell>
        <Ico><path d="M1 1h10M1 4h10" stroke="#30a040" /><path d="M1 7h10" stroke="#e03030" /><rect x="1" y="9" width="6" height="2.5" fill="#e03030" /></Ico>
      </Cell>
      <Cell>
        <Ico><path d="M1 1h10M1 4h10M1 7h10" stroke="#30a040" /><rect x="3" y="9" width="6" height="2.5" fill="#e03030" /></Ico>
      </Cell>
      <Sep className="w-[5px]" />
      <Cell>
        <Ico><path d="M1 11h11" stroke="#2a3aa8" /><path d="M2 10 9 2" stroke="#202020" strokeWidth="2" /><path d="M8 5l3-4" stroke="#d05050" strokeWidth="1.4" /></Ico>
      </Cell>
      <Sep className="w-[4px]" />
      <div className="w-[7px] shrink-0" />
      {timeframes.map((t) => (
        <Cell key={t}>
          <span className="inline-block scale-x-[0.72] whitespace-nowrap">{t}</span>
        </Cell>
      ))}
      <Sep className="w-[5px]" />
      {["D", "W", "M"].map((t) => (
        <Cell key={t}>
          <span className="inline-block scale-x-[0.8]">{t}</span>
        </Cell>
      ))}
      <Sep className="w-[6px]" />
      <Cell>
        <svg viewBox="0 0 10 10" className="h-[10px] w-[9px]" fill="none" stroke="#101010" strokeWidth="1.4">
          <circle cx="5" cy="5" r="4" />
          <path d="M5 2.5V5h2" />
        </svg>
      </Cell>
    </div>
  </>
);

const Tooltip = () => (
  <div className="absolute left-[2px] top-[449px] h-[54px] w-[83px] bg-[#ff8080]/70 pl-[3px] pt-[1px] text-[9px] font-bold leading-[8.3px] text-[#2a1414]">
    {["03/09/2023 23:00", "", "Open: 184.21", "High: 184.28", "Low: 184.20", "Close: 184.27", "Vol.: 5397"].map((line, i) => (
      <div key={i} className={i === 1 ? "h-[3px]" : "origin-left scale-x-[0.85] whitespace-nowrap"}>
        {line}
      </div>
    ))}
  </div>
);

export default function App() {
  return (
    <div className="relative flex h-[750px] w-[1332px] flex-col overflow-hidden bg-white font-['Liberation_Sans',sans-serif]">
      <TitleBar />
      <MenuBar />
      <Toolbars />

      {/* chart area */}
      <div className="flex h-[618px] shrink-0 flex-col bg-[#437c7c]">
        <div className="relative flex h-[503px] shrink-0">
          <MainChart />
          <PriceAxis />
          <Tooltip />
        </div>
        <div className="h-px shrink-0 bg-black" />
        <div className="relative shrink-0">
          <MacdPane />
          <div className="absolute left-[2px] top-0 flex h-[9px] w-[24px] items-center justify-center border-b border-r border-[#808080] bg-[#f4f4f4] text-[8px] font-bold leading-none text-black">
            <span className="inline-block scale-x-[0.9]">MACD</span>
          </div>
        </div>
        <TimeAxis />
      </div>

      <TabBar />
      <StatusBar />
      <Taskbar />

      {/* mouse pointer */}
      <svg viewBox="0 0 14 22" className="absolute left-[546px] top-[24px] h-[22px] w-[14px]">
        <path d="M1 0v17l4-3.5 3 7.5 3-1-2.5-7H14z" fill="#f4f4f4" stroke="#404040" strokeWidth="0.9" />
      </svg>
    </div>
  );
}
